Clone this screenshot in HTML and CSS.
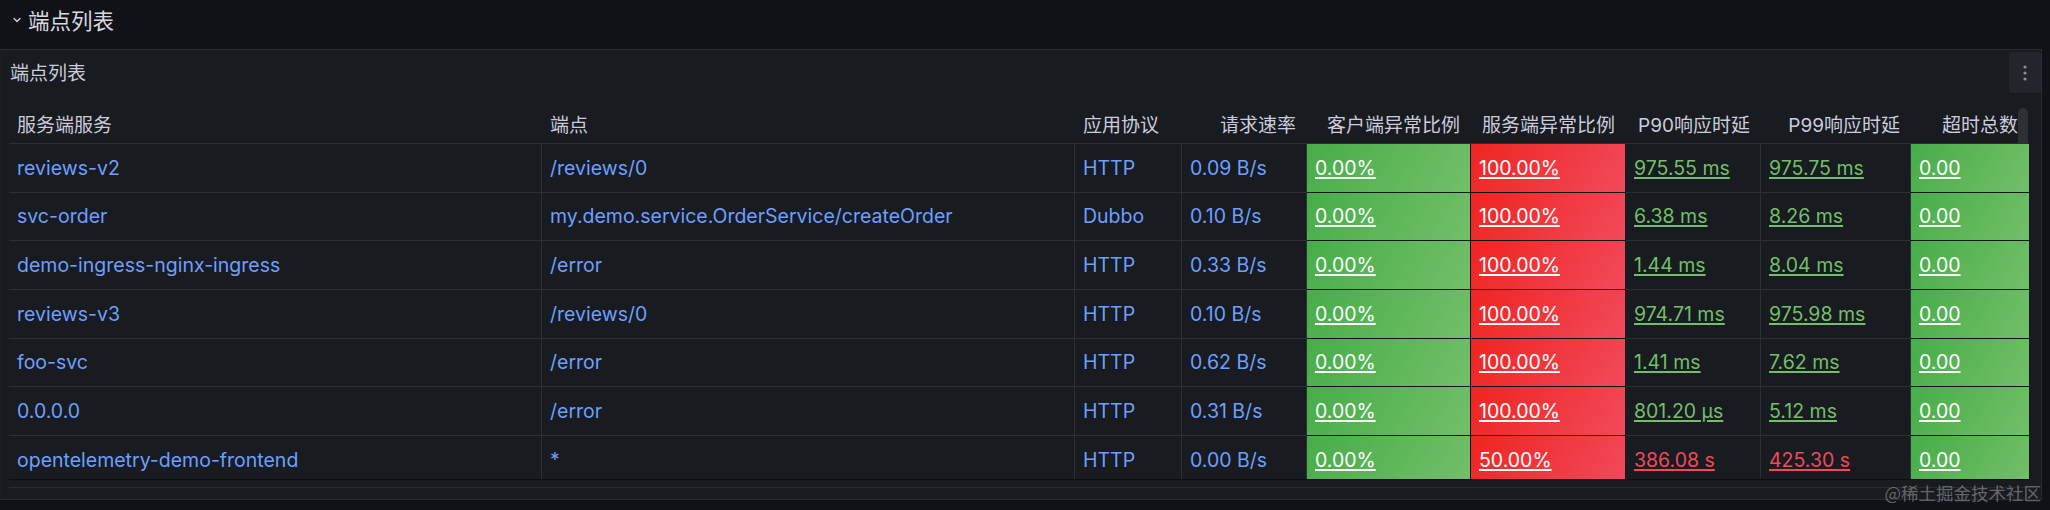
FILE: index.html
```html
<!DOCTYPE html>
<html>

<head>
    <meta charset="utf-8">
    <title>端点列表</title>
    <link rel="stylesheet" href="styles.css">
</head>

<body>
    <div class="row-title">
        <svg class="chevron" width="8" height="6" viewBox="0 0 8 6">
            <path d="M1 1.5 L4 4.5 L7 1.5" fill="none" stroke="#ccccdc" stroke-width="1.4" stroke-linecap="round" stroke-linejoin="round" />
        </svg>
        <span>端点列表</span>
    </div>

    <section class="panel">
        <div class="panel-header">
            <h2>端点列表</h2>
            <div class="menu">
                <svg width="6" height="18" viewBox="0 0 6 18">
                    <circle cx="3" cy="3" r="1.6" fill="#8e8f96" />
                    <circle cx="3" cy="9" r="1.6" fill="#8e8f96" />
                    <circle cx="3" cy="15" r="1.6" fill="#8e8f96" />
                </svg>
            </div>
        </div>

        <div class="table-wrap">
            <table>
                <colgroup>
                    <col style="width: 533px">
                    <col style="width: 533px">
                    <col style="width: 107px">
                    <col style="width: 125px">
                    <col style="width: 164px">
                    <col style="width: 155px">
                    <col style="width: 135px">
                    <col style="width: 150px">
                    <col style="width: 118px">
                </colgroup>
                <thead>
                    <tr>
                        <th>服务端服务</th>
                        <th>端点</th>
                        <th>应用协议</th>
                        <th class="num">请求速率</th>
                        <th class="num">客户端异常比例</th>
                        <th class="num">服务端异常比例</th>
                        <th class="num">P90响应时延</th>
                        <th class="num">P99响应时延</th>
                        <th class="num">超时总数</th>
                    </tr>
                </thead>
                <tbody>
                    <tr>
                        <td class="link">reviews-v2</td>
                        <td class="link">/reviews/0</td>
                        <td class="link">HTTP</td>
                        <td class="link">0.09 B/s</td>
                        <td class="bg-green"><a>0.00%</a></td>
                        <td class="bg-red"><a>100.00%</a></td>
                        <td><a class="green">975.55 ms</a></td>
                        <td><a class="green">975.75 ms</a></td>
                        <td class="bg-green"><a>0.00</a></td>
                    </tr>
                    <tr>
                        <td class="link">svc-order</td>
                        <td class="link">my.demo.service.OrderService/createOrder</td>
                        <td class="link">Dubbo</td>
                        <td class="link">0.10 B/s</td>
                        <td class="bg-green"><a>0.00%</a></td>
                        <td class="bg-red"><a>100.00%</a></td>
                        <td><a class="green">6.38 ms</a></td>
                        <td><a class="green">8.26 ms</a></td>
                        <td class="bg-green"><a>0.00</a></td>
                    </tr>
                    <tr>
                        <td class="link">demo-ingress-nginx-ingress</td>
                        <td class="link">/error</td>
                        <td class="link">HTTP</td>
                        <td class="link">0.33 B/s</td>
                        <td class="bg-green"><a>0.00%</a></td>
                        <td class="bg-red"><a>100.00%</a></td>
                        <td><a class="green">1.44 ms</a></td>
                        <td><a class="green">8.04 ms</a></td>
                        <td class="bg-green"><a>0.00</a></td>
                    </tr>
                    <tr>
                        <td class="link">reviews-v3</td>
                        <td class="link">/reviews/0</td>
                        <td class="link">HTTP</td>
                        <td class="link">0.10 B/s</td>
                        <td class="bg-green"><a>0.00%</a></td>
                        <td class="bg-red"><a>100.00%</a></td>
                        <td><a class="green">974.71 ms</a></td>
                        <td><a class="green">975.98 ms</a></td>
                        <td class="bg-green"><a>0.00</a></td>
                    </tr>
                    <tr>
                        <td class="link">foo-svc</td>
                        <td class="link">/error</td>
                        <td class="link">HTTP</td>
                        <td class="link">0.62 B/s</td>
                        <td class="bg-green"><a>0.00%</a></td>
                        <td class="bg-red"><a>100.00%</a></td>
                        <td><a class="green">1.41 ms</a></td>
                        <td><a class="green">7.62 ms</a></td>
                        <td class="bg-green"><a>0.00</a></td>
                    </tr>
                    <tr>
                        <td class="link">0.0.0.0</td>
                        <td class="link">/error</td>
                        <td class="link">HTTP</td>
                        <td class="link">0.31 B/s</td>
                        <td class="bg-green"><a>0.00%</a></td>
                        <td class="bg-red"><a>100.00%</a></td>
                        <td><a class="green">801.20 µs</a></td>
                        <td><a class="green">5.12 ms</a></td>
                        <td class="bg-green"><a>0.00</a></td>
                    </tr>
                    <tr>
                        <td class="link">opentelemetry-demo-frontend</td>
                        <td class="link">*</td>
                        <td class="link">HTTP</td>
                        <td class="link">0.00 B/s</td>
                        <td class="bg-green"><a>0.00%</a></td>
                        <td class="bg-red"><a>50.00%</a></td>
                        <td><a class="red">386.08 s</a></td>
                        <td><a class="red">425.30 s</a></td>
                        <td class="bg-green"><a>0.00</a></td>
                    </tr>
                </tbody>
            </table>
            <div class="scroll-thumb"></div>
        </div>

        <div class="panel-foot"></div>
    </section>

    <div class="watermark">@稀土掘金技术社区</div>
</body>

</html>
```

FILE: styles.css
```css
body {
    margin: 0;
    width: 2050px;
    height: 510px;
    overflow: hidden;
    background-color: #111217;
    color: #ccccdc;
    font-family: "Inter", "Noto Sans CJK SC", sans-serif;
    position: relative;
}

.row-title {
    height: 38px;
    display: flex;
    align-items: center;
    gap: 7px;
    padding-left: 13px;
    font-size: 21.5px;
    color: #d8d9e0;
}

.chevron {
    margin-top: 1px;
}

.panel {
    margin-top: 11px;
    width: 2040px;
    background-color: #181b1f;
    border: 1px solid #2a2c31;
    border-left-color: #1d1f23;
}

.panel-header {
    height: 47px;
    display: flex;
    justify-content: space-between;
    align-items: center;
    padding-left: 9px;
}

.panel-header h2 {
    margin: 0;
    font-size: 19px;
    font-weight: 400;
    color: #ccccdc;
    padding-bottom: 4px;
}

.menu {
    align-self: flex-start;
    margin-top: 2px;
    width: 32px;
    height: 41px;
    background-color: #22252b;
    border-radius: 3px;
    display: flex;
    align-items: center;
    justify-content: center;
}

.table-wrap {
    position: relative;
    margin-left: 8px;
    width: 2020px;
    height: 382px;
    overflow: hidden;
    border-bottom: 1px solid #0d0e11;
}

table {
    table-layout: fixed;
    width: 2020px;
    border-collapse: separate;
    border-spacing: 0;
    font-size: 19.5px;
}

th {
    height: 47px;
    box-sizing: border-box;
    padding: 0 11px 5px 8px;
    vertical-align: bottom;
    line-height: 24px;
    text-align: left;
    font-size: 19px;
    font-weight: 400;
    color: #ccccdc;
    white-space: nowrap;
    border-bottom: 1px solid #2d2f34;
}

th.num {
    text-align: right;
}

td {
    height: 48.67px;
    box-sizing: border-box;
    padding: 0 8px;
    line-height: 24px;
    white-space: nowrap;
    overflow: hidden;
    border-right: 1px solid #2d2f34;
    border-bottom: 1px solid #2d2f34;
}

td:last-child {
    border-right: 0;
}

.link {
    color: #6e9fff;
}

td a {
    text-decoration: underline;
    text-decoration-thickness: 1.5px;
    text-underline-offset: 2px;
    color: #ffffff;
}

td a.green {
    color: #73bf69;
}

td a.red {
    color: #f2495c;
}

.bg-green {
    background: linear-gradient(120deg, #47ad49, #73bf69);
    border-color: #121316;
}

.bg-red {
    background: linear-gradient(120deg, #ef2520, #f2495c);
    border-color: #121316;
}

.scroll-thumb {
    position: absolute;
    top: 11px;
    right: 1px;
    width: 10px;
    height: 35px;
    background-color: #2e3036;
    border-radius: 5px 5px 0 0;
}

.panel-foot {
    margin-top: 7px;
    margin-left: 8px;
    height: 11px;
    border-top: 1px solid #2a2c31;
}

.watermark {
    position: absolute;
    right: 9px;
    bottom: 5px;
    font-family: "Noto Sans CJK SC", sans-serif;
    font-size: 17.5px;
    color: rgba(210, 210, 215, 0.42);
}
```
